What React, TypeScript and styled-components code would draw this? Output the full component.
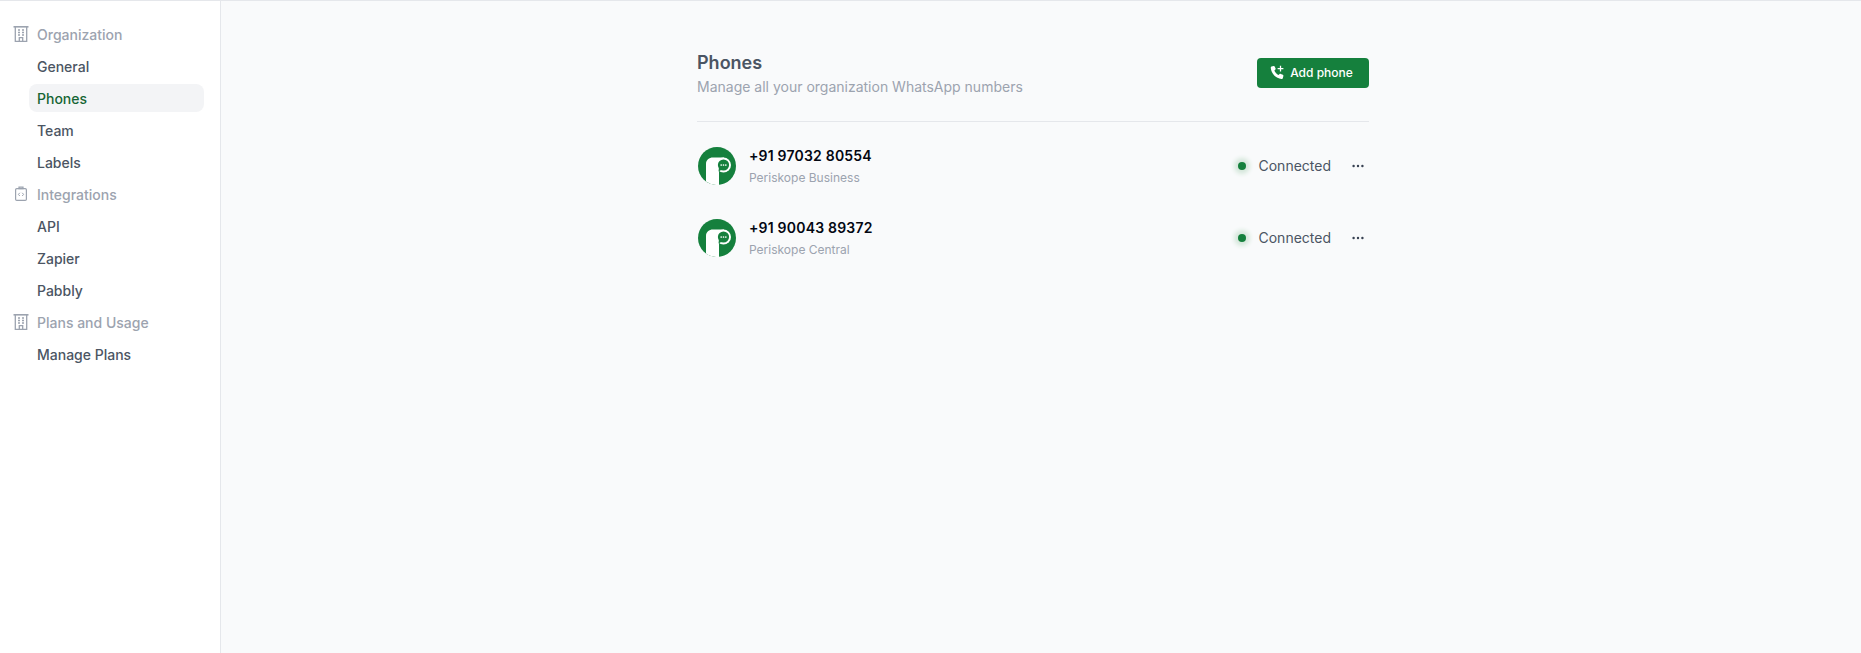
import React from "react";
import styled, { createGlobalStyle } from "styled-components";

const GlobalStyle = createGlobalStyle`
  html, body {
    margin: 0;
    padding: 0;
    height: 100%;
    font-family: Inter, "Liberation Sans", sans-serif;
  }
  #root {
    height: 100%;
  }
  * {
    box-sizing: border-box;
  }
`;

const Page = styled.div`
  display: flex;
  height: 653px;
  overflow: hidden;
  background-color: #f9fafb;
  border-top: 1px solid #e5e7eb;
`;

const Sidebar = styled.nav`
  width: 221px;
  flex-shrink: 0;
  background-color: #fff;
  border-right: 1px solid #e5e7eb;
  padding: 19px 16px 0 13px;
  display: flex;
  flex-direction: column;
  gap: 4px;
`;

const SectionTitle = styled.div`
  display: flex;
  align-items: center;
  gap: 8px;
  height: 28px;
  font-size: 14px;
  font-weight: 500;
  color: #9ca3af;
`;

const NavItem = styled.div<{ $active?: boolean }>`
  height: 28px;
  margin-left: 16px;
  padding-left: 8px;
  border-radius: 8px;
  display: flex;
  align-items: center;
  font-size: 14px;
  font-weight: 500;
  color: ${(props) => (props.$active ? "#166534" : "#4b5563")};
  background-color: ${(props) => (props.$active ? "#f3f4f6" : "transparent")};
`;

const Main = styled.main`
  flex: 1;
  display: flex;
  justify-content: center;
  padding-top: 50px;
  padding-right: 16px;
`;

const Content = styled.div`
  width: 672px;
`;

const Header = styled.header`
  display: flex;
  justify-content: space-between;
  align-items: flex-start;
  padding-bottom: 24px;
  border-bottom: 1px solid #e5e7eb;
`;

const Title = styled.h1`
  margin: 0;
  font-size: 18px;
  line-height: 24px;
  font-weight: 600;
  color: #4b5563;
`;

const Subtitle = styled.p`
  margin: 2px 0 0;
  font-size: 14px;
  line-height: 20px;
  color: #9ca3af;
`;

const AddButton = styled.button`
  display: flex;
  align-items: center;
  justify-content: center;
  gap: 5px;
  width: 112px;
  height: 30px;
  margin-top: 7px;
  padding: 0 3px 1px 0;
  border: none;
  border-radius: 4px;
  background-color: #15803d;
  color: #fff;
  font-family: inherit;
  font-size: 12px;
  font-weight: 500;
`;

const PhoneList = styled.div`
  display: flex;
  flex-direction: column;
  padding-top: 25px;
  gap: 34px;
`;

const PhoneRow = styled.div`
  display: flex;
  align-items: center;
  height: 38px;
`;

const Avatar = styled.svg`
  width: 38px;
  height: 38px;
  margin-left: 1px;
  flex-shrink: 0;
`;

const PhoneInfo = styled.div`
  flex: 1;
  margin-left: 13px;
  display: flex;
  flex-direction: column;
  gap: 4px;
`;

const PhoneNumber = styled.div`
  font-size: 14px;
  line-height: 20px;
  font-weight: 600;
  letter-spacing: 0.2px;
  color: #030712;
`;

const PhoneName = styled.div`
  font-size: 12px;
  line-height: 16px;
  color: #9ca3af;
`;

const Status = styled.div`
  display: flex;
  align-items: center;
  gap: 8px;
  padding-bottom: 1px;
  font-size: 14px;
  color: #4b5563;
`;

const Dot = styled.span`
  width: 8px;
  height: 8px;
  margin: 0 4px;
  border-radius: 50%;
  background-color: #15803d;
  box-shadow: 0 0 4px 4px #d5e7db;
`;

const MoreButton = styled.span`
  display: flex;
  margin: 0 4px 0 20px;
  color: #374151;
`;

function BuildingIcon() {
  return (
    <svg width="16" height="16" viewBox="0 0 16 16" fill="none" stroke="#9ca3af" strokeWidth="1.3">
      <path d="M0.5 0.8H15.5" strokeWidth="1.6" />
      <path d="M2.3 1V15.3H13.7V1" />
      <path d="M6.3 15.3V11.6H9.7V15.3" />
      <path d="M5 4H7M9 4H11M5 6.5H7M9 6.5H11M5 9H7M9 9H11" strokeWidth="1.5" />
    </svg>
  );
}

function ApiIcon() {
  return (
    <svg width="16" height="16" viewBox="0 0 16 16" fill="none" stroke="#9ca3af" strokeWidth="1.2">
      <rect x="2.6" y="2.6" width="10.8" height="11.8" rx="1.2" />
      <path d="M6 1.2H10V2.6H6Z" />
      <path d="M6.8 6.8L5.4 8.4L6.8 10M9.2 6.8L10.6 8.4L9.2 10" strokeWidth="1" />
    </svg>
  );
}

function PhonePlusIcon() {
  return (
    <svg width="15" height="15" viewBox="0 0 14 14" fill="#fff">
      <path d="M1.4 1.5L3.3 .9C3.8 .8 4.2 1 4.4 1.4L5.2 3.2C5.4 3.6 5.3 4 5 4.3L4.1 5.2C4.6 6.8 6.2 8.6 8 9.4L9 8.5C9.3 8.2 9.7 8.2 10.1 8.3L12 9.2C12.4 9.4 12.6 9.8 12.5 10.2L12 12.2C11.9 12.8 11.3 13.2 10.6 13.1C5.6 12.7 1.2 8.1.7 2.9C.6 2.2.9 1.7 1.4 1.5Z" />
      <path d="M9.8.6V6M7.1 3.3H12.5" stroke="#fff" strokeWidth="1.2" fill="none" />
    </svg>
  );
}

function MoreIcon() {
  return (
    <svg width="14" height="14" viewBox="0 0 14 14" fill="currentColor">
      <circle cx="2.6" cy="7" r="1.2" />
      <circle cx="7" cy="7" r="1.2" />
      <circle cx="11.4" cy="7" r="1.2" />
    </svg>
  );
}

function PeriskopeLogo() {
  return (
    <Avatar viewBox="0 0 38 38">
      <circle cx="19" cy="19" r="19" fill="#15803d" />
      <path d="M8 17C8 13 11 10.5 15 10.5H26V24H21V37.9A19 19 0 0 1 8 34.5Z" fill="#fff" />
      <circle cx="25.5" cy="18" r="7.5" fill="#fff" />
      <circle cx="25.5" cy="18" r="5.6" fill="#15803d" />
      <path d="M20.5 24.5L21 20L24 22.5Z" fill="#15803d" />
      <circle cx="23.2" cy="18" r="0.85" fill="#fff" />
      <circle cx="25.5" cy="18" r="0.85" fill="#fff" />
      <circle cx="27.8" cy="18" r="0.85" fill="#fff" />
    </Avatar>
  );
}

const phones = [
  { number: "+91 97032 80554", name: "Periskope Business" },
  { number: "+91 90043 89372", name: "Periskope Central" },
];

export default function App() {
  return (
    <>
      <GlobalStyle />
      <Page>
        <Sidebar>
          <SectionTitle>
            <BuildingIcon />
            Organization
          </SectionTitle>
          <NavItem>General</NavItem>
          <NavItem $active>Phones</NavItem>
          <NavItem>Team</NavItem>
          <NavItem>Labels</NavItem>
          <SectionTitle>
            <ApiIcon />
            Integrations
          </SectionTitle>
          <NavItem>API</NavItem>
          <NavItem>Zapier</NavItem>
          <NavItem>Pabbly</NavItem>
          <SectionTitle>
            <BuildingIcon />
            Plans and Usage
          </SectionTitle>
          <NavItem>Manage Plans</NavItem>
        </Sidebar>
        <Main>
          <Content>
            <Header>
              <div>
                <Title>Phones</Title>
                <Subtitle>Manage all your organization WhatsApp numbers</Subtitle>
              </div>
              <AddButton>
                <PhonePlusIcon />
                Add phone
              </AddButton>
            </Header>
            <PhoneList>
              {phones.map((phone) => (
                <PhoneRow key={phone.number}>
                  <PeriskopeLogo />
                  <PhoneInfo>
                    <PhoneNumber>{phone.number}</PhoneNumber>
                    <PhoneName>{phone.name}</PhoneName>
                  </PhoneInfo>
                  <Status>
                    <Dot />
                    Connected
                  </Status>
                  <MoreButton>
                    <MoreIcon />
                  </MoreButton>
                </PhoneRow>
              ))}
            </PhoneList>
          </Content>
        </Main>
      </Page>
    </>
  );
}
